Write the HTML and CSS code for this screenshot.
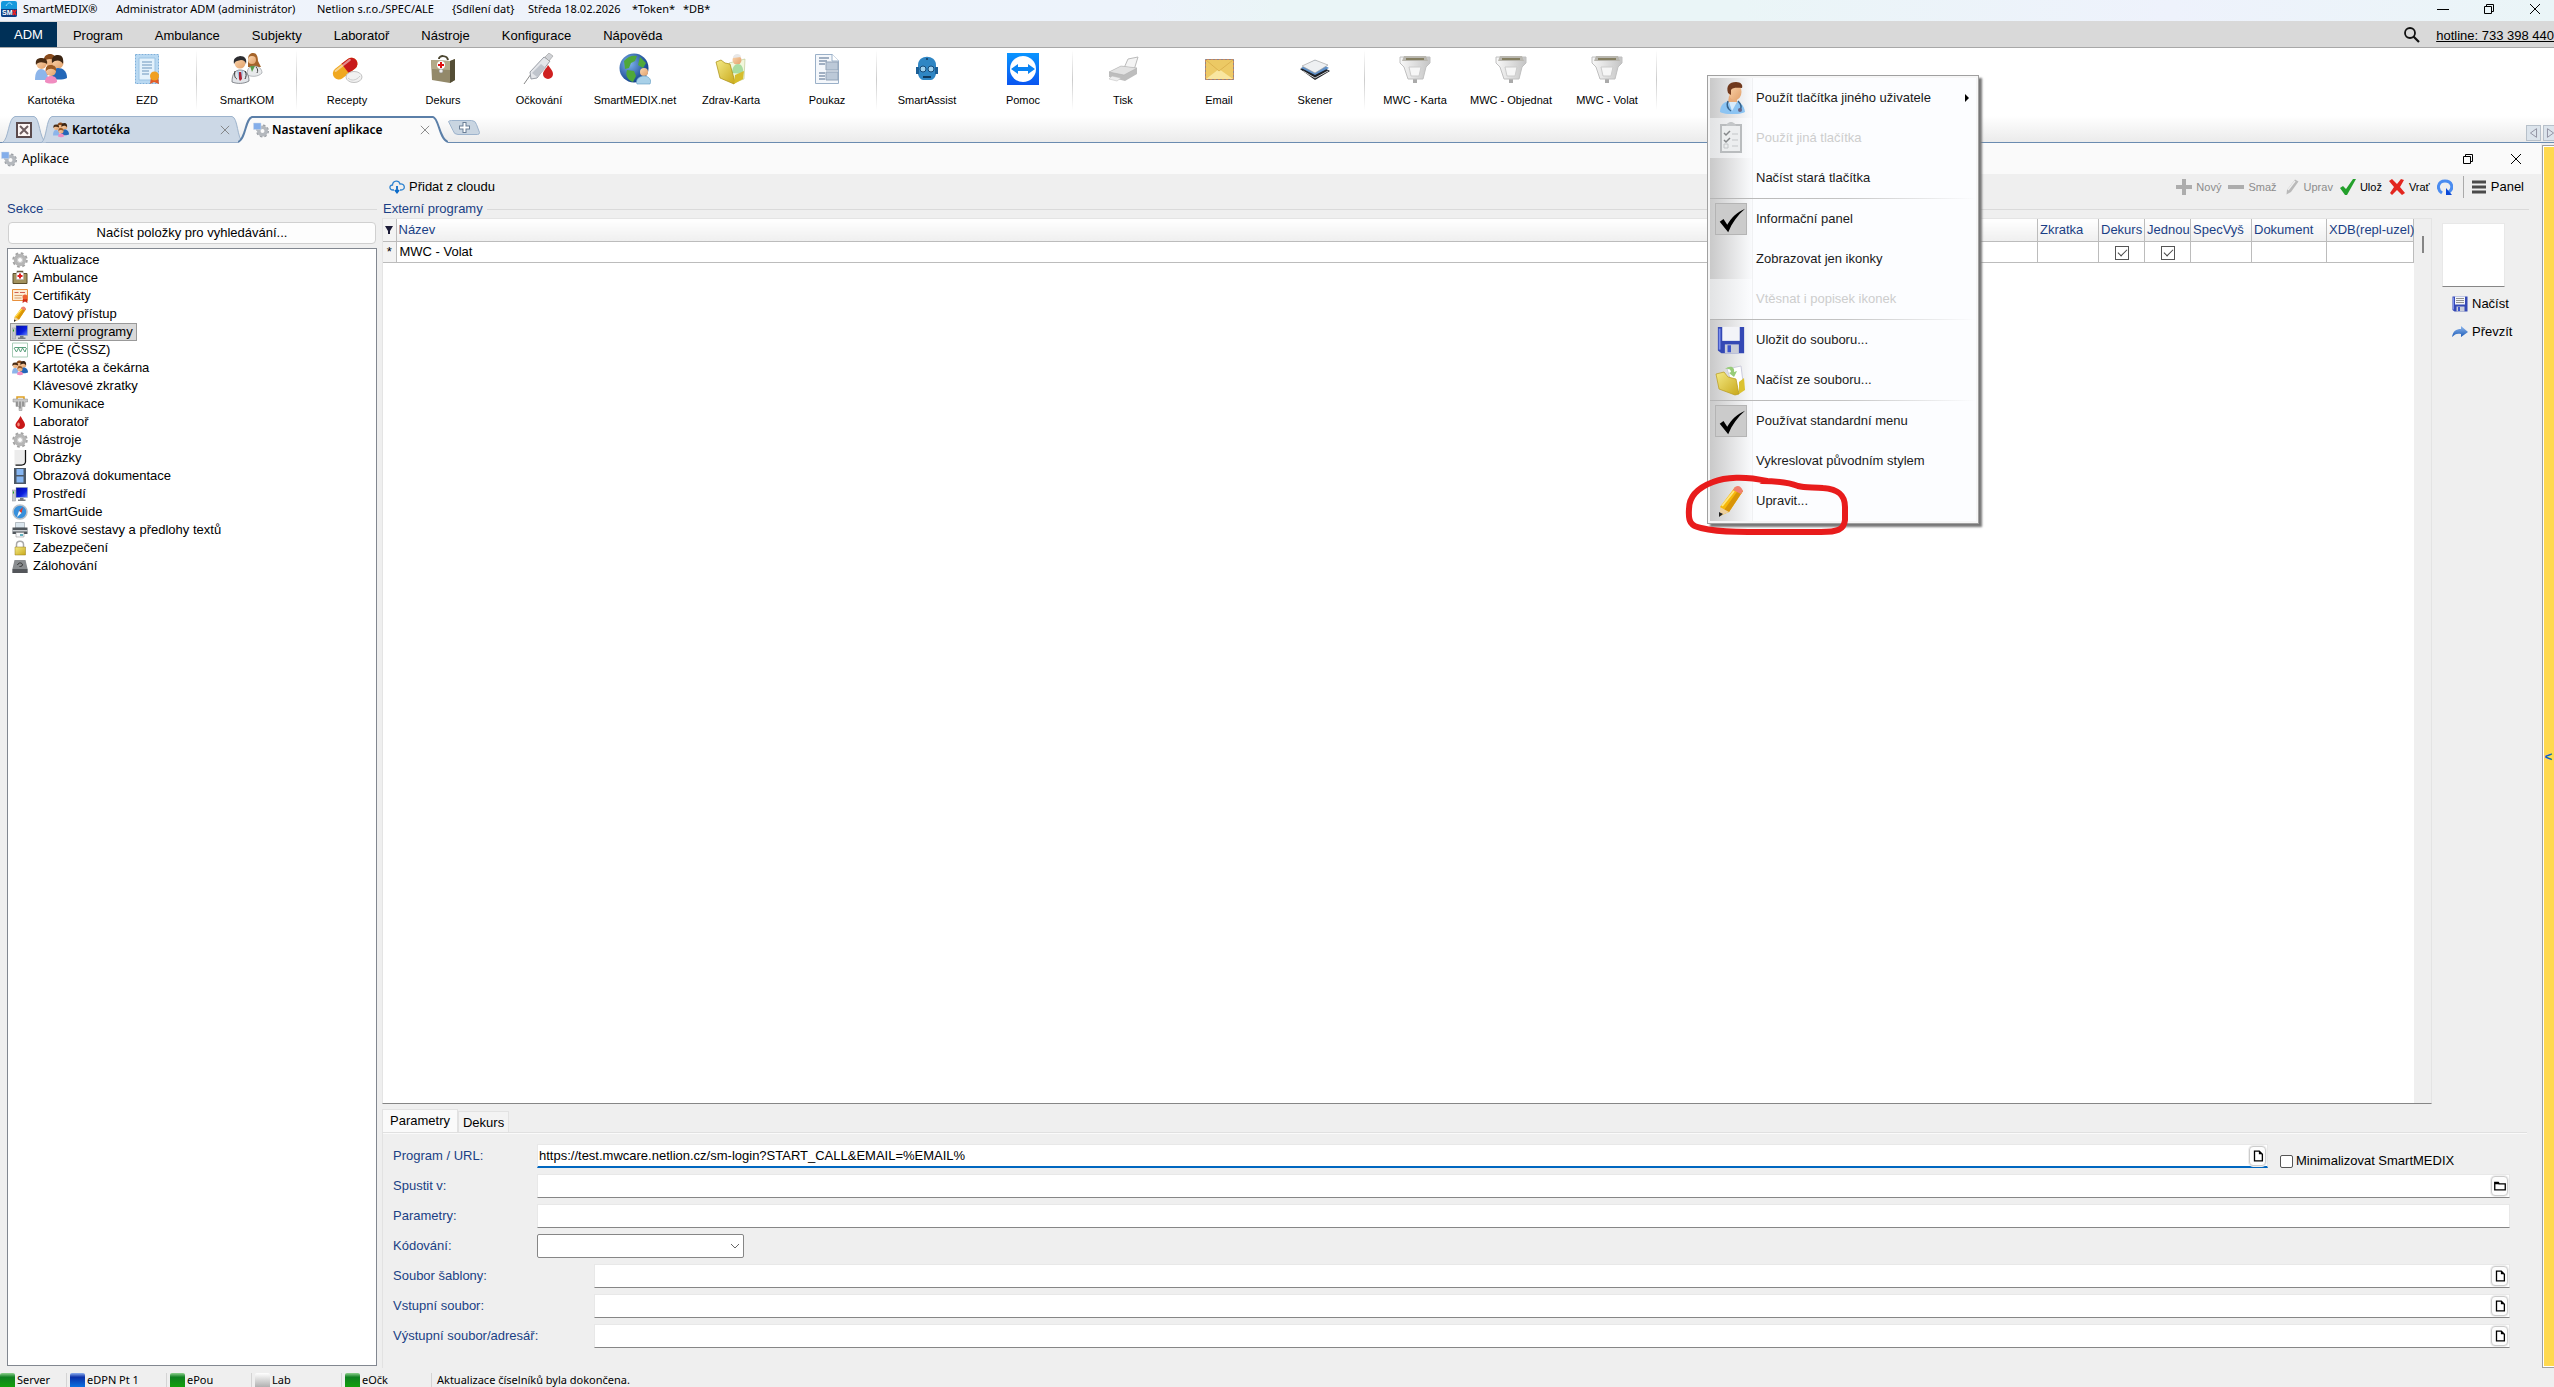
FILE: index.html
```html
<!DOCTYPE html>
<html lang="cs">
<head>
<meta charset="utf-8">
<title>SmartMEDIX</title>
<link rel="stylesheet" href="styles.css">
</head>
<body>
<svg class="sprite" aria-hidden="true">
  <defs>
    <linearGradient id="gBlue" x1="0" y1="0" x2="0" y2="1"><stop offset="0" stop-color="#8fb8ee"/><stop offset="1" stop-color="#1d5cb8"/></linearGradient>
    <linearGradient id="gGold" x1="0" y1="0" x2="1" y2="1"><stop offset="0" stop-color="#f4ea86"/><stop offset="1" stop-color="#c9a91a"/></linearGradient>
    <linearGradient id="gGrey" x1="0" y1="0" x2="1" y2="0"><stop offset="0" stop-color="#f8f8f8"/><stop offset="1" stop-color="#c4c4c4"/></linearGradient>
    <linearGradient id="gScreen" x1="0" y1="0" x2="1" y2="1"><stop offset="0" stop-color="#0008a0"/><stop offset=".6" stop-color="#0a1fe0"/><stop offset="1" stop-color="#6b8cff"/></linearGradient>
    <linearGradient id="gTv" x1="0" y1="0" x2="0" y2="1"><stop offset="0" stop-color="#0a95ff"/><stop offset="1" stop-color="#0a55f0"/></linearGradient>
    <radialGradient id="gGlobe" cx=".35" cy=".35" r=".7"><stop offset="0" stop-color="#7fb4ee"/><stop offset="1" stop-color="#0b3a86"/></radialGradient>
    <linearGradient id="gSkin" x1="0" y1="0" x2="1" y2="1"><stop offset="0" stop-color="#fbd6ae"/><stop offset="1" stop-color="#e2a06a"/></linearGradient>
  </defs>
  <symbol id="people" viewBox="0 0 32 32">
    <circle cx="15" cy="8" r="5.5" fill="url(#gSkin)"/><path d="M9 9c-1-6 3-8 6-8s7 2 6 8c-2-3-9-5-12 0z" fill="#8a4b1c"/>
    <path d="M10 22c0-6 2-9 5-9s6 3 6 9z" fill="#e06a5a"/>
    <circle cx="6.500" cy="11" r="5" fill="url(#gSkin)"/><path d="M1 12c-1-6 2-7 6-7s6 3 5 6c-3-2-9-3-11 1z" fill="#4a2c14"/>
    <path d="M0 27c0-7 2-11 6-11s7 4 7 11z" fill="#8cb5ea"/>
    <circle cx="23" cy="10" r="5.500" fill="url(#gSkin)"/><path d="M17 10c-1-7 3-8 6-8 4 0 6 3 5 9-2-4-7-5-11-1z" fill="#3c2513"/>
    <path d="M16 25c0-7 3-10 7-10 5 0 9 3 9 10-4 2-12 2-16 0z" fill="#2367b8"/>
    <circle cx="16" cy="18" r="5" fill="url(#gSkin)"/><path d="M11 18c-1-5 2-6 5-6s6 2 5 6c-3-3-7-3-10 0z" fill="#9a5a24"/>
    <path d="M10 29c0-4 2-6 6-6s6 2 6 6c-3 2-9 2-12 0z" fill="#f08cc0"/>
  </symbol>
  <symbol id="ezd" viewBox="0 0 32 32">
    <path d="M4.500 1.500h23v29h-23z" fill="#b9d9f2" stroke="#7fb0da" stroke-dasharray="2 1"/><path d="M8 5h16v22H8z" fill="#e4f2fc" stroke="#9cc4e4"/>
    <path d="M11 9h10M11 12h10M11 15h10M11 18h7M11 21h7" stroke="#6d96bd"/>
    <path d="M20 24l-1 7 4-2 5 2-1-7z" fill="#e25a28"/><circle cx="23.500" cy="23" r="4.500" fill="#f0a020"/>
  </symbol>
  <symbol id="doctors" viewBox="0 0 32 32">
    <path d="M17 7c0-5 2-7 5-7s5 3 5 8l3 6H17z" fill="#a5642a"/><circle cx="21" cy="7" r="4" fill="url(#gSkin)"/>
    <path d="M16 22c0-6 2-9 7-9s8 3 8 7c-4 4-10 4-15 2z" fill="#e8eaec" stroke="#8c9096" stroke-width=".6"/><path d="M19 13l2 6 3-6z" fill="#5a9a4a"/><path d="M25 14c2 2 2 4 1 6" fill="none" stroke="#444" stroke-width="1"/>
    <circle cx="9" cy="10" r="5.500" fill="url(#gSkin)"/><path d="M3 11c-1-6 2-7 6-8 5 0 7 3 6 8-1-3-2-4-5-4-3 1-5 0-7 4z" fill="#2c2c30"/>
    <path d="M1 29c0-8 3-12 8-12s9 3 9 11c-5 3-12 3-17 1z" fill="#e2e5e9" stroke="#6c7076" stroke-width=".8"/><path d="M6 17l3 3 3-3-1 9H8z" fill="#9ab8dc"/><path d="M8 19h2l1 7-2 2-1-2z" fill="#b02030"/><path d="M4 18c-1 5 0 7 2 8M14 18c2 3 1 6 0 8" fill="none" stroke="#333" stroke-width="1"/>
  </symbol>
  <symbol id="pills" viewBox="0 0 32 32">
    <g transform="rotate(-38 14 17)"><rect x="1" y="10" width="28" height="12" rx="6" fill="#f0a820"/><path d="M15 10h8a6 6 0 0 1 0 12h-8z" fill="#c81a1a"/><path d="M6 12h18" stroke="#fff" stroke-width="2" opacity=".5" stroke-linecap="round"/></g>
    <ellipse cx="23" cy="24" rx="8" ry="5.500" fill="#f1f1f1" stroke="#c2c2c2"/><path d="M17 25c3 3 8 3 12-2" fill="none" stroke="#ccc"/>
  </symbol>
  <symbol id="bag" viewBox="0 0 32 32">
    <path d="M12 6c0-4 8-4 9 1" fill="none" stroke="#4a4530" stroke-width="2"/>
    <path d="M4 7l19 1 5-2v21l-5 3-18-3z" fill="#93896a"/><path d="M23 8l5-2v21l-5 3z" fill="#544d35"/><path d="M4 7l19 1v9L5 16z" fill="#b3aa88"/>
    <circle cx="14" cy="12" r="4" fill="#fff"/><path d="M14 9v6M11 12h6" stroke="#e01010" stroke-width="2"/><circle cx="14" cy="18" r="2" fill="#eee" stroke="#888" stroke-width=".5"/>
  </symbol>
  <symbol id="syringe" viewBox="0 0 32 32">
    <path d="M1 31L8 21" stroke="#888"/><path d="M7 19L21 4l6 4-13 17-6 1z" fill="#e4e6ea" stroke="#9a9ea6"/><path d="M9 20l9-9 5 4-9 9z" fill="#bfc4cc"/><path d="M22 4l4-4 4 3-4 5z" fill="#d0d2d6" stroke="#999" stroke-width=".6"/>
    <path d="M25 12c3 4 5 6 5 9a5 5 0 0 1-10 0c0-3 3-5 5-9z" fill="#cf2020"/>
  </symbol>
  <symbol id="globe" viewBox="0 0 32 32">
    <circle cx="15" cy="15" r="14.500" fill="url(#gGlobe)"/><path d="M5 8c4-5 9-6 13-5l-2 5-4 2-2 5-4 1zM8 17l7 1 2 5-3 6c-5-2-8-6-6-12zM21 4l6 6-3 5-5-3z" fill="#4fa83a"/>
    <circle cx="25" cy="19" r="4" fill="url(#gSkin)"/><path d="M18 31c-2-4 2-8 7-8s8 4 6 8z" fill="#a8d0e8" stroke="#5c98c0" stroke-width=".6"/>
  </symbol>
  <symbol id="health" viewBox="0 0 32 32">
    <path d="M14 10l16-4-1 20-11 4z" fill="#f2f7dc" stroke="#b8c48a" stroke-width=".6"/><circle cx="22" cy="7" r="4.500" fill="url(#gSkin)"/><path d="M18 5c0-5 8-5 8-1z" fill="#e8e8e8"/><path d="M17 20c0-6 3-9 6-9s6 3 5 10z" fill="#a8dca0"/>
    <path d="M1 9l5-2 4 3 5 1 5 18-1 2L5 25z" fill="url(#gGold)" stroke="#a88c10" stroke-width=".7"/><path d="M19 31l9-5 1-8-9 4z" fill="#d6bd2c"/>
  </symbol>
  <symbol id="doc" viewBox="0 0 32 32">
    <path d="M4.500 1.500h17l6 6v23h-23z" fill="#f4f7fb" stroke="#9ab0c8"/><path d="M21 1v7h7" fill="#fff" stroke="#9ab0c8"/>
    <path d="M8 5h10M8 8h8M8 11h6M8 20h6M8 23h6M8 26h6" stroke="#8498b0" stroke-width="1.500"/><path d="M15 9h12v8H15zM15 19h12v8H15z" fill="#bcc9d8" stroke="#93a4b8"/>
  </symbol>
  <symbol id="robot" viewBox="0 0 32 32">
    <path d="M7 12C7 1 25 1 25 12v8c0 4-3 7-5 7h-8c-2 0-5-3-5-7z" fill="#2f86c4"/><path d="M5 14h3v7H5zM24 14h3v7h-3z" fill="#1c5f96"/><circle cx="12" cy="16" r="3" fill="#9fd2f0" stroke="#164a78"/><circle cx="20" cy="16" r="3" fill="#9fd2f0" stroke="#164a78"/><path d="M12 23h8v2h-8z" fill="#10395c"/><circle cx="16" cy="6" r="1" fill="#10395c"/>
  </symbol>
  <symbol id="viewer" viewBox="0 0 32 32">
    <path d="M0 0h32v32H0z" fill="url(#gTv)"/><circle cx="16" cy="16" r="13" fill="#fff"/><path d="M4 16l7-5v3h10v-3l7 5-7 5v-3H11v3z" fill="#0a84f5"/>
  </symbol>
  <symbol id="printer" viewBox="0 0 32 32">
    <path d="M17 15l4-9 10-2-4 13z" fill="#f4f4f4" stroke="#bbb"/><path d="M2 19l12-6 16 2v6L18 28 2 24z" fill="#bdbdbd"/><path d="M2 19l12-6 16 2-13 7z" fill="#e2e2e2" stroke="#aaa" stroke-width=".5"/><path d="M5 23l9 2-4 3-8-2z" fill="#eee" stroke="#bbb" stroke-width=".5"/>
  </symbol>
  <symbol id="mail" viewBox="0 0 32 32">
    <path d="M3 7h27v19H3z" fill="#edca66"/><path d="M3 26l13-10 14 10z" fill="#f9e6a0"/><path d="M3 7l13 11L30 7" fill="#ecc964" stroke="#d8ac4a" stroke-width=".8"/><path d="M2.500 6.500h28v20h-28z" fill="none" stroke="#c98a5a"/><path d="M2.500 6.500h28v20h-28z" fill="none" stroke="#5a80b5" stroke-dasharray="1 3"/>
  </symbol>
  <symbol id="scanner" viewBox="0 0 32 32">
    <path d="M1 16l15 11 15-9-15-8z" fill="#1c2026"/><path d="M2 15l14 7 14-7-14-8z" fill="#5d8fc8"/><path d="M3 13l13-6 13 5-13 8z" fill="#eef0f2" stroke="#999" stroke-width=".6"/><path d="M4 18l12 7 13-7" fill="none" stroke="#ccc"/>
  </symbol>
  <symbol id="plug" viewBox="0 0 32 32">
    <path d="M14 25h4v5h-4z" fill="#aaa"/><path d="M1 4h30v6l-4 4-3 12H9L5 14 1 10z" fill="url(#gGrey)" stroke="#c0c0c0"/><path d="M5 3h22l2 5H3z" fill="#b9b7b0"/><path d="M7 5h18v2H7z" fill="#857f62"/><path d="M10 14h12l-2 9h-8z" fill="#f6f6f6" stroke="#ccc"/>
  </symbol>
  <symbol id="gear" viewBox="0 0 32 32">
    <circle cx="16" cy="16" r="13" fill="none" stroke="#a3a3a3" stroke-width="5" stroke-dasharray="5.200 5"/><circle cx="16" cy="16" r="9" fill="none" stroke="#b6b6b6" stroke-width="7"/><circle cx="16" cy="16" r="5" fill="#fff" stroke="#999"/>
  </symbol>
  <symbol id="appgear" viewBox="0 0 32 32">
    <circle cx="19" cy="18" r="11" fill="none" stroke="#999da2" stroke-width="4" stroke-dasharray="4.600 4"/><circle cx="19" cy="18" r="7.500" fill="none" stroke="#b4b8bd" stroke-width="7"/><path d="M1 2h15v13H1z" fill="#84aeea" stroke="#ccd8ea"/>
  </symbol>
  <symbol id="case" viewBox="0 0 32 32">
    <path d="M11 7V3h10v4" fill="none" stroke="#65583a" stroke-width="3"/><path d="M2 7h28v20H2z" fill="#a3925e" stroke="#5c4f2c" stroke-width="2"/><path d="M9 5h14v14H9z" fill="#fff" stroke="#aaa"/><path d="M16 7v10M11 12h10" stroke="#e02020" stroke-width="4"/>
  </symbol>
  <symbol id="cert" viewBox="0 0 32 32">
    <path d="M1 3h30v22H1z" fill="#fdebd2" stroke="#e8903c" stroke-width="2"/><path d="M5 9h8m3 0h10" stroke="#d06050" stroke-width="2"/><path d="M5 15h16M5 20h14" stroke="#d8a070" stroke-width="2"/><path d="M22 20l-1 10 5-3 5 3-1-10z" fill="#d02a18"/><circle cx="26" cy="18" r="5" fill="#ee6030"/>
  </symbol>
  <symbol id="pencil" viewBox="0 0 32 32">
    <path d="M5 22L20 2l8 4-14 21-9 4z" fill="#f6b80c"/><path d="M9 25L24 4l4 2-14 21z" fill="#d89408"/><path d="M20 2q5-3 8 4l-2 3-8-4z" fill="#f08070"/><path d="M5 22l9 5-9 4z" fill="#ecd0a0"/><path d="M4 27l4 2-4 3z" fill="#222"/><path d="M7 21L19 6" stroke="#ffe680" stroke-width="2"/>
  </symbol>
  <symbol id="pencilgrey" viewBox="0 0 32 32"><path d="M6 22L22 1l7 4-15 21-9 5z" fill="#b9b9b9"/><path d="M8 22L22 4" stroke="#eee" stroke-width="3"/></symbol>
  <symbol id="pc" viewBox="0 0 32 32">
    <path d="M0 8h7v22H0z" fill="#c4c8cc" stroke="#8c9096"/><path d="M3 11v4" stroke="#20a020" stroke-width="2"/><path d="M8 3h23v20H8z" fill="url(#gScreen)" stroke="#9aa"/><path d="M16 24h7v3h4v3H12v-3h4z" fill="#777c82"/>
  </symbol>
  <symbol id="cssz" viewBox="0 0 32 32"><path d="M1 2h30v28H1z" fill="#fff" stroke="#a9cdb8" stroke-width="2"/><path d="M4 12l5 8 4-8 4 8 4-8 5 8 3-8M5 11h23" fill="none" stroke="#5aa07c" stroke-width="2"/></symbol>
  <symbol id="port" viewBox="0 0 32 32"><path d="M10 6V2h14v4" fill="none" stroke="#e0a020" stroke-width="3"/><path d="M2 6h29v6h-5v9h-6v8h-6v-8H8v-9H2z" fill="#c9c9c9" stroke="#888"/><path d="M10 11v9M16 11v14M22 11v9" stroke="#666" stroke-width="2"/></symbol>
  <symbol id="drop" viewBox="0 0 32 32"><path d="M17 4c5 9 9 13 9 18a9.500 8 0 0 1-19 0c0-5 6-9 10-18z" fill="#c81818"/><ellipse cx="13" cy="21" rx="2.500" ry="4" fill="#f58a7a"/></symbol>
  <symbol id="sheet" viewBox="0 0 32 32"><path d="M5 0h22v24l-6 6H5z" fill="#ececec"/><path d="M27 0v24q-1 6-8 6H7" fill="none" stroke="#111" stroke-width="2.500"/></symbol>
  <symbol id="film" viewBox="0 0 32 32"><path d="M4 0h24v32H4z" fill="#4c5866"/><path d="M9 2h14v12H9zM9 17h14v12H9z" fill="#86b6f2"/></symbol>
  <symbol id="compass" viewBox="0 0 32 32"><circle cx="16" cy="16" r="14" fill="#3790dc" stroke="#b9c1c9" stroke-width="3"/><path d="M22 6l-3 12-5-4z" fill="#e03a2a"/><path d="M10 26l4-12 5 4z" fill="#fff"/></symbol>
  <symbol id="print2" viewBox="0 0 32 32"><path d="M7 1h18v11H7z" fill="#dbe6ee" stroke="#7c868e"/><path d="M1 11h30v13H1z" fill="#50565c"/><path d="M1 16h30v3H1z" fill="#caced2"/><path d="M8 21h16v9H8z" fill="#f6f8fa" stroke="#888"/><path d="M16 24h6v4h-6z" fill="#60b0c0"/></symbol>
  <symbol id="lock" viewBox="0 0 32 32"><path d="M9 15V9c0-9 14-9 14 0v6" fill="none" stroke="#a9a9a9" stroke-width="3"/><path d="M6 14h21v16H6z" fill="url(#gGold)" stroke="#947a1c"/></symbol>
  <symbol id="disk" viewBox="0 0 32 32"><path d="M5 4h22l4 17v9H1v-9z" fill="#8a8d90"/><path d="M1 22h30v8H1z" fill="#53565a"/><path d="M11 14c2-6 10-5 10 0-1 3-4 3-6 3" fill="none" stroke="#333" stroke-width="2"/></symbol>
  <symbol id="floppy" viewBox="0 0 32 32"><path d="M1 1h30v30H5l-4-3z" fill="#3448b4"/><path d="M6 1h20v16H6z" fill="#f3f4f8"/><path d="M9 21h16v10H9z" fill="#c9ccd8"/><path d="M12 22h4v8h-4z" fill="#3c55cc"/><path d="M3 3v24" stroke="#7d90ee" stroke-width="2"/></symbol>
  <symbol id="floppylines" viewBox="0 0 32 32"><use href="#floppy"/><path d="M8 5h16M8 9h16M8 13h16" stroke="#909090" stroke-width="2"/></symbol>
  <symbol id="openfile" viewBox="0 0 32 32">
    <path d="M12 5l14-3 3 24-9 3z" fill="#fff" stroke="#ccd"/><path d="M10 5c5-4 10-2 9 3l3-1-3 6-5-4 2-1c0-3-3-4-6-3z" fill="#98cc78"/><path d="M1 10l8-2 4 5 8 2 3 15-4 1L4 25z" fill="url(#gGold)" stroke="#b89a18" stroke-width=".7"/><path d="M24 30l6-4-1-12-5 4z" fill="#dcc230"/>
  </symbol>
  <symbol id="doctor" viewBox="0 0 32 32">
    <path d="M5 30c0-8 5-11 12-11s12 3 13 11c-6 3-19 3-25 0z" fill="#8cc4f2"/><path d="M14 14h8v7l-4 3-5-4z" fill="#e8ac7c"/><ellipse cx="20" cy="10" rx="6.500" ry="8" fill="url(#gSkin)"/><path d="M13 11c-2-7 1-11 8-11 5 0 7 3 6 6-4 0-9-1-11 2v5z" fill="#70381c"/><path d="M14 20l3 9 5-9" fill="#d8ecfc"/><path d="M13 19c-2 5 0 8 3 10M23 19c3 3 4 6 2 9" fill="none" stroke="#34618a" stroke-width="1.500"/><circle cx="25" cy="28" r="2" fill="#668"/>
  </symbol>
  <symbol id="clip" viewBox="0 0 32 32"><path d="M6 3h20v27H6z" fill="#eceeef" stroke="#b9bcbe" stroke-width="2"/><path d="M11 4c0-2 3-4 5-4s5 2 5 4z" fill="#c3c6c8"/><path d="M9 11l2 2 4-4M9 18l2 2 4-4" fill="none" stroke="#85888a" stroke-width="1.500"/><path d="M17 12h6M17 18h6M17 24h6M9 22h4v4H9z" fill="none" stroke="#c3c6c8"/></symbol>
  <symbol id="tick" viewBox="0 0 32 32"><path d="M4 19l4-3 4 6C17 14 22 9 31 5 23 12 17 20 13 30z" fill="#000"/></symbol>
  <symbol id="file" viewBox="0 0 16 16"><path d="M4 2.500h5.500L13 6v7.500H4z" fill="#fff" stroke="#000" stroke-width="1.500"/><path d="M9 2v4h4" fill="#000"/></symbol>
  <symbol id="folder" viewBox="0 0 16 16"><path d="M2 12.500V4h4l1 1.500h7v7z" fill="#fff" stroke="#000" stroke-width="1.500"/><path d="M2 4h5v2H2z"/></symbol>
  <symbol id="xthin" viewBox="0 0 12 12"><path d="M1 1l10 10M11 1L1 11" fill="none" stroke="currentColor"/></symbol>
  <symbol id="restore" viewBox="0 0 12 12"><path d="M1.500 3.500h7v7h-7zM3.500 3.500v-2h7v7h-2" fill="none" stroke="currentColor"/></symbol>
</svg>

<div class="app">
  <header class="titlebar">
    <svg class="logo" viewBox="0 0 16 16"><rect width="16" height="16" rx="2" fill="#1598dc"/><path d="M0 8h16v6a2 2 0 0 1-2 2H2a2 2 0 0 1-2-2z" fill="#0c3f86"/><path d="M5 5c2-4 5-4 6-1" fill="none" stroke="#9adcff"/><text x="1" y="14" font-size="7" font-weight="bold" fill="#fff" font-family="Liberation Sans">SM</text><path d="M12 9l3 5M15 9l-3 5" stroke="#f02020" stroke-width="1.500"/></svg>
    <span class="t-name">SmartMEDIX®</span><span class="t-user">Administrator ADM (administrátor)</span><span class="t-org">Netlion s.r.o./SPEC/ALE</span><span class="t-share">{Sdílení dat}</span><span class="t-date">Středa 18.02.2026</span><span class="t-token">*Token*</span><span>*DB*</span>
    <div class="winbtns">
      <button aria-label="Minimalizovat"><svg viewBox="0 0 12 12"><path d="M0 6.500h12" stroke="#000"/></svg></button>
      <button aria-label="Obnovit"><svg><use href="#restore"/></svg></button>
      <button aria-label="Zavřít"><svg><use href="#xthin"/></svg></button>
    </div>
  </header>

  <nav class="menubar">
    <button class="adm">ADM</button><button>Program</button><button>Ambulance</button><button>Subjekty</button><button>Laboratoř</button><button>Nástroje</button><button>Konfigurace</button><button>Nápověda</button>
    <div class="hot"><svg class="search" viewBox="0 0 18 18"><circle cx="7" cy="7" r="5" fill="none" stroke="#111" stroke-width="1.800"/><path d="M10.500 10.500L16 16" stroke="#111" stroke-width="2.200"/></svg><a href="#">hotline: 733 398 440</a></div>
  </nav>

  <div class="toolbar">
    <button><svg><use href="#people"/></svg>Kartotéka</button>
    <button><svg><use href="#ezd"/></svg>EZD</button>
    <i></i>
    <button><svg><use href="#doctors"/></svg>SmartKOM</button>
    <i></i>
    <button><svg><use href="#pills"/></svg>Recepty</button>
    <button><svg><use href="#bag"/></svg>Dekurs</button>
    <button><svg><use href="#syringe"/></svg>Očkování</button>
    <button><svg><use href="#globe"/></svg>SmartMEDIX.net</button>
    <button><svg><use href="#health"/></svg>Zdrav-Karta</button>
    <button><svg><use href="#doc"/></svg>Poukaz</button>
    <i></i>
    <button><svg><use href="#robot"/></svg>SmartAssist</button>
    <button><svg><use href="#viewer"/></svg>Pomoc</button>
    <i></i>
    <button><svg><use href="#printer"/></svg>Tisk</button>
    <button><svg><use href="#mail"/></svg>Email</button>
    <button><svg><use href="#scanner"/></svg>Skener</button>
    <i></i>
    <button><svg><use href="#plug"/></svg>MWC - Karta</button>
    <button><svg><use href="#plug"/></svg>MWC - Objednat</button>
    <button><svg><use href="#plug"/></svg>MWC - Volat</button>
    <i></i>
  </div>

  <div class="tabs">
    <div class="tab tab-x">
      <svg class="shape" viewBox="0 0 44 27"><path d="M.500 26.500C7 23 6 2 13 .500h19c6 1 5 22 12 26" fill="#ccd8e6" stroke="#9db3cc"/></svg>
      <button aria-label="Zavřít vše"><svg viewBox="0 0 16 16"><path d="M1 1h14v14H1z" fill="#fdf6f4" stroke="#5a4a4c" stroke-width="2"/><path d="M4 4l8 8M12 4l-8 8" stroke="#6e5e60" stroke-width="2"/></svg></button>
    </div>
    <div class="tab tab-k">
      <svg class="shape" viewBox="0 0 202 27"><path d="M.500 26.500C6 23 5 2 11 .500h180c6 1 5 22 11 26" fill="#ccd8e6" stroke="#9db3cc"/></svg>
      <svg class="ic"><use href="#people"/></svg><b>Kartotéka</b><button aria-label="Zavřít kartu"><svg><use href="#xthin"/></svg></button>
    </div>
    <div class="tab tab-n">
      <svg class="shape" viewBox="0 0 210 27"><path d="M0 26C8 23 7 3 14 1h181c6 1 6 22 15 25v2H0z" fill="#fafafa"/><path d="M0 26C8 23 7 3 14 1h181c6 1 6 22 15 25" fill="none" stroke="#5b7fa8" stroke-width="2"/></svg>
      <svg class="ic"><use href="#appgear"/></svg><b>Nastavení aplikace</b><button aria-label="Zavřít kartu"><svg><use href="#xthin"/></svg></button>
    </div>
    <button class="tab-plus" aria-label="Nová karta"><svg viewBox="0 0 33 15"><path d="M.500 1.500q1-1 3-1h20q4 0 5 4l3 8q0 2-2 2H10q-4 0-5-4z" fill="#c9d5e1" stroke="#9db3cc"/><path d="M16.500 2v11M11 7.500h11" stroke="#6b7f96" stroke-width="4"/><path d="M16.500 3v9M12 7.500h9" stroke="#fff" stroke-width="2"/></svg></button>
    <div class="tabnav"><button aria-label="Vlevo"><svg viewBox="0 0 15 16"><path d="M11 3v10L4 8z" fill="none" stroke="#889"/></svg></button><button aria-label="Vpravo"><svg viewBox="0 0 15 16"><path d="M4 3v10l7-5z" fill="none" stroke="#889"/></svg></button></div>
  </div>

  <div class="work">
    <main class="mdi">
      <div class="mdihead"><svg class="ic"><use href="#appgear"/></svg><span>Aplikace</span>
        <div class="mdibtns"><button aria-label="Obnovit okno"><svg><use href="#restore"/></svg></button><button aria-label="Zavřít okno"><svg><use href="#xthin"/></svg></button></div>
      </div>
      <div class="mdibody">
        <section class="left">
          <h2 class="legend">Sekce</h2>
          <button class="load">Načíst položky pro vyhledávání...</button>
          <ul class="list">
            <li><svg><use href="#gear"/></svg>Aktualizace</li>
            <li><svg><use href="#case"/></svg>Ambulance</li>
            <li><svg><use href="#cert"/></svg>Certifikáty</li>
            <li><svg><use href="#pencil"/></svg>Datový přístup</li>
            <li class="sel"><svg><use href="#pc"/></svg>Externí programy</li>
            <li><svg><use href="#cssz"/></svg>IČPE (ČSSZ)</li>
            <li><svg><use href="#people"/></svg>Kartotéka a čekárna</li>
            <li><svg></svg>Klávesové zkratky</li>
            <li><svg><use href="#port"/></svg>Komunikace</li>
            <li><svg><use href="#drop"/></svg>Laboratoř</li>
            <li><svg><use href="#gear"/></svg>Nástroje</li>
            <li><svg><use href="#sheet"/></svg>Obrázky</li>
            <li><svg><use href="#film"/></svg>Obrazová dokumentace</li>
            <li><svg><use href="#pc"/></svg>Prostředí</li>
            <li><svg><use href="#compass"/></svg>SmartGuide</li>
            <li><svg><use href="#print2"/></svg>Tiskové sestavy a předlohy textů</li>
            <li><svg><use href="#lock"/></svg>Zabezpečení</li>
            <li><svg><use href="#disk"/></svg>Zálohování</li>
          </ul>
        </section>
        <section class="right">
          <div class="actions">
            <button class="cloud"><svg viewBox="0 0 16 16"><path d="M5 11H4C0 11 0 6 3.500 6 4 1 10 1 11 5c5-1 6 6 1 6h-1" fill="none" stroke="#2f83d0" stroke-width="1.300"/><path d="M8 7v6M6 11l2 2.500 2-2.500" fill="none" stroke="#0a6ac8" stroke-width="1.800"/></svg>Přidat z cloudu</button>
            <div class="crud">
              <button disabled><svg viewBox="0 0 16 16"><path d="M6 0h4v6h6v4h-6v6H6v-6H0V6h6z" fill="#adadad"/></svg>Nový</button>
              <button disabled><svg viewBox="0 0 16 16"><path d="M0 6h16v4H0z" fill="#adadad"/></svg>Smaž</button>
              <button disabled><svg><use href="#pencilgrey"/></svg>Uprav</button>
              <button><svg viewBox="0 0 16 16"><path d="M0 9l3-2 3 3 7-10h3L7 16H5z" fill="#24a02c"/></svg>Ulož</button>
              <button><svg viewBox="0 0 16 16"><path d="M0 2l3-2 5 5 4-5 3 1-4 7 5 6-3 2-5-5-5 5-2-2 4-6z" fill="#e3261e"/></svg>Vrať</button>
              <button aria-label="Obnovit data"><svg viewBox="0 0 16 16"><path d="M5 14C-1 10 1 2 8 2s9 7 4 11" fill="none" stroke="#4a8cf0" stroke-width="3"/><path d="M9 9v7h6z" fill="#0a48d8"/></svg></button>
              <button class="panelbtn"><svg viewBox="0 0 14 14"><path d="M0 2h14M0 7h14M0 12h14" stroke="#4a4a4a" stroke-width="3"/></svg>Panel</button>
            </div>
          </div>
          <h2 class="legend wide">Externí programy</h2>
          <div class="area">
            <div class="gridbox">
              <div class="scroller">
              <table class="grid">
                <colgroup><col class="c-mark"><col><col class="c-zk"><col class="c-de"><col class="c-je"><col class="c-sp"><col class="c-do"><col class="c-xd"></colgroup>
                <thead><tr><th class="m"><svg viewBox="0 0 8 8"><path d="M0 0h8L5 5v3H3V5z" fill="#1c1c38"/></svg></th><th>Název</th><th>Zkratka</th><th>Dekurs</th><th>Jednou</th><th>SpecVyš</th><th>Dokument</th><th>XDB(repl-uzel)</th></tr></thead>
                <tbody><tr><td class="m">*</td><td>MWC - Volat</td><td></td><td class="c"><input type="checkbox" checked aria-label="Dekurs"></td><td class="c"><input type="checkbox" checked aria-label="Jednou"></td><td></td><td></td><td></td></tr></tbody>
              </table>
              </div>
              <div class="vscroll"><span></span></div>
            </div>
            <div class="side">
              <div class="pic"></div>
              <button><svg><use href="#floppylines"/></svg>Načíst</button>
              <button><svg viewBox="0 0 16 16"><path d="M0 13c1-6 4-8 9-8V2l7 6-7 5v-3c-4-1-6 0-9 3z" fill="url(#gBlue)"/></svg>Převzít</button>
            </div>
          </div>
          <div class="ptabs"><button class="on">Parametry</button><button>Dekurs</button></div>
          <form class="form">
            <div class="row"><label for="f1">Program / URL:</label><div class="field focus"><input id="f1" type="text" value="https://test.mwcare.netlion.cz/sm-login?START_CALL&amp;EMAIL=%EMAIL%"><button type="button" aria-label="Vybrat soubor"><svg><use href="#file"/></svg></button></div><label class="min"><input type="checkbox">Minimalizovat SmartMEDIX</label></div>
            <div class="row"><label for="f2">Spustit v:</label><div class="field"><input id="f2" type="text"><button type="button" aria-label="Vybrat složku"><svg><use href="#folder"/></svg></button></div></div>
            <div class="row"><label for="f3">Parametry:</label><div class="field"><input id="f3" type="text"></div></div>
            <div class="row"><label for="f4">Kódování:</label><div class="combo"><select id="f4"><option></option></select><svg viewBox="0 0 10 6"><path d="M1 1l4 4 4-4" fill="none" stroke="#666"/></svg></div></div>
            <div class="row in"><label for="f5">Soubor šablony:</label><div class="field"><input id="f5" type="text"><button type="button" aria-label="Vybrat soubor"><svg><use href="#file"/></svg></button></div></div>
            <div class="row in"><label for="f6">Vstupní soubor:</label><div class="field"><input id="f6" type="text"><button type="button" aria-label="Vybrat soubor"><svg><use href="#file"/></svg></button></div></div>
            <div class="row in"><label for="f7">Výstupní soubor/adresář:</label><div class="field"><input id="f7" type="text"><button type="button" aria-label="Vybrat soubor"><svg><use href="#file"/></svg></button></div></div>
          </form>
        </section>
      </div>
    </main>
    <aside class="strip"><button>&lt;</button></aside>
  </div>

  <footer class="status">
    <span class="s1"><i></i>Server</span><span class="s2"><i class="blue"></i>eDPN Pt 1</span><span class="s3"><i></i>ePou</span><span class="s4"><i class="grey"></i>Lab</span><span class="s4"><i></i>eOčk</span><span class="msg">Aktualizace číselníků byla dokončena.</span>
  </footer>

  <div class="popup" role="menu">
    <button role="menuitem"><span class="pi"><svg><use href="#doctor"/></svg></span>Použít tlačítka jiného uživatele<svg class="arrow" viewBox="0 0 4 8"><path d="M0 0l4 4-4 4z"/></svg></button>
    <button role="menuitem" disabled><span class="pi"><svg><use href="#clip"/></svg></span>Použít jiná tlačítka</button>
    <button role="menuitem"><span class="pi"></span>Načíst stará tlačítka</button>
    <hr>
    <button role="menuitem"><span class="pi"><svg class="ck"><use href="#tick"/></svg></span>Informační panel</button>
    <button role="menuitem"><span class="pi"></span>Zobrazovat jen ikonky</button>
    <button role="menuitem" disabled><span class="pi"></span>Vtěsnat i popisek ikonek</button>
    <hr>
    <button role="menuitem"><span class="pi"><svg class="sm"><use href="#floppy"/></svg></span>Uložit do souboru...</button>
    <button role="menuitem"><span class="pi"><svg><use href="#openfile"/></svg></span>Načíst ze souboru...</button>
    <hr>
    <button role="menuitem"><span class="pi"><svg class="ck"><use href="#tick"/></svg></span>Používat standardní menu</button>
    <button role="menuitem"><span class="pi"></span>Vykreslovat původním stylem</button>
    <button role="menuitem"><span class="pi"><svg><use href="#pencil"/></svg></span>Upravit...</button>
  </div>
  <svg class="mark" viewBox="0 0 170 64"><path d="M82 8C60 3 40 4 28 9 12 15 4 24 4 36c-1 13 2 17 12 19 20 5 32 3 50 4h70c16 0 23-2 24-12V34c0-13-8-18-22-19-10-1-18 0-25-2-10-4-21-5-36-5z" fill="none" stroke="#e81c1c" stroke-width="6" stroke-linejoin="round"/></svg>
</div>
</body>
</html>
```
FILE: styles.css
```css
* { box-sizing: border-box; }
body { margin: 0; font: 13px/18px "Liberation Sans", Arial, sans-serif; color: #000; background: #efefef; }
button { font: inherit; color: inherit; background: none; border: 0; padding: 0; display: flex; align-items: center; white-space: nowrap; }
svg { display: block; flex: none; width: 16px; height: 16px; }
.sprite { position: absolute; width: 0; height: 0; }
.app { position: relative; height: 100vh; display: flex; flex-direction: column; overflow: hidden; }

.titlebar { display: flex; align-items: center; height: 21px; padding: 0 13px 3px 1px; background: linear-gradient(90deg, #eff3fb 0, #edf3fb 45%, #eaf5f7 50%, #eaf5f7 68%, #eef2fc 85%, #eaf5f7); font: 11px/16px "Noto Sans", "Open Sans", sans-serif; white-space: nowrap; flex: none; }
.logo { margin-right: 6px; }
.t-name { width: 93px; }
.t-user { width: 201px; }
.t-org { width: 135px; }
.t-share { width: 76px; }
.t-date { width: 104px; }
.t-token { width: 51px; }
.winbtns { display: flex; gap: 34px; margin-left: auto; }
.winbtns svg, .mdibtns svg { width: 12px; height: 12px; }

.menubar { display: flex; height: 27px; background: #d9d9d9; border-bottom: 1px solid #a8a8a8; flex: none; padding-top: 1px; }
.menubar button { padding: 2px 16px 0; }
.menubar .adm { background: #003057; color: #fff; padding: 0 14px; }
.hot { display: flex; align-items: center; margin-left: auto; gap: 15px; white-space: nowrap; }
.hot a { color: #000; padding-top: 3px; }
.search { width: 18px; height: 18px; }

.toolbar { display: flex; height: 68px; padding-left: 3px; background: #fff; flex: none; }
.toolbar button { width: 96px; flex-direction: column; padding-top: 5px; gap: 6px; font-size: 11px; }
.toolbar svg { width: 32px; height: 32px; }
.toolbar i { width: 1px; margin: 2px 2px 6px 1px; background: linear-gradient(#fff, #ccc 50%, #fff); }

.tabs { display: flex; height: 27px; padding-left: 2px; background: linear-gradient(#fff, #ebebeb); border-bottom: 1px solid #6a8bb0; flex: none; }
.tab { position: relative; display: flex; align-items: center; height: 27px; font: 12px/18px "Noto Sans", "Open Sans", sans-serif; }
.tab > * { position: relative; }
.tab .shape { position: absolute; left: 0; top: 0; width: 100%; height: 27px; }
.tab b { margin-left: 3px; font-weight: 600; white-space: nowrap; }
.tab button { margin-left: auto; color: #777; }
.tab-x { width: 44px; }
.tab-x button { margin: 0 0 0 14px; }
.tab-k { width: 202px; margin-left: -5px; padding: 0 13px 0 12px; }
.tab-k button svg, .tab-n button svg { width: 10px; height: 10px; }
.tab-n { width: 210px; margin-left: -5px; padding: 0 18px 0 15px; }
.tab-plus svg { width: 33px; height: 15px; }
.tab-plus { padding-bottom: 3px; }
.tabnav { display: flex; gap: 2px; margin: 9px -4px 0 auto; }
.tabnav button { background: #dce4ec; border: 1px solid #b7c0ca; height: 16px; }
.tabnav svg { width: 13px; height: 14px; }

.work { display: flex; flex: 1; min-height: 0; }
.mdi { display: flex; flex-direction: column; flex: 1; min-width: 0; }
.strip { width: 12px; margin-top: 2px; padding-right: 2px; border: 1px solid #a0a0a0; border-right: 0; box-shadow: inset 1px 1px #fff, inset 0 -1px #fff; background: #ffd94f; display: flex; align-items: center; justify-content: flex-end; color: #0a62c8; font-weight: bold; }
.mdihead { display: flex; align-items: center; height: 31px; padding: 0 19px 0 1px; margin-right: 1px; background: #fafafa; gap: 5px; font: 12px/18px "Noto Sans", "Open Sans", sans-serif; flex: none; }
.mdibtns { display: flex; gap: 36px; margin-left: auto; }
.mdibody { display: flex; flex: 1; min-height: 0; }
.left { display: flex; flex-direction: column; width: 377px; padding: 26px 0 2px 7px; flex: none; }
.legend { display: flex; align-items: center; gap: 4px; margin: 0; height: 18px; font-size: 13px; font-weight: normal; color: #1a3f85; white-space: nowrap; flex: none; }
.legend::after { content: ""; flex: 1; height: 1px; background: #dadada; }
.load { justify-content: center; height: 22px; margin: 4px 1px; background: #fdfdfd; border: 1px solid #d0d0d0; border-radius: 4px; flex: none; }
.list { flex: 1; margin: 0; padding: 2px; list-style: none; background: #fff; border: 1px solid #828790; overflow: hidden; }
.list li { display: flex; align-items: center; gap: 5px; width: max-content; height: 18px; padding: 0 3px 0 1px; border: 1px solid transparent; }
.list .sel { background: #d9d9d9; border-color: #999; }

.right { display: flex; flex-direction: column; flex: 1; min-width: 0; padding-left: 5px; }
.actions { display: flex; align-items: center; justify-content: space-between; height: 26px; padding: 0 18px 0 7px; flex: none; }
.actions button { gap: 4px; }
.crud { display: flex; align-items: center; gap: 7px; font-size: 11px; }
.crud button:disabled { color: #8c8c8c; }
.crud .panelbtn { margin-left: 3px; padding-left: 8px; height: 22px; border-left: 1px solid #aaa; font-size: 13px; gap: 5px; }
.panelbtn svg { width: 14px; height: 14px; }
.wide { margin: 0 13px 0 1px; }
.area { display: flex; flex: 1; min-height: 0; }
.gridbox { display: flex; flex: 1; min-width: 0; background: #fff; border: 1px solid #e4e4e4; border-bottom-color: #868686; }
.scroller { flex: 1; min-width: 0; }
.vscroll { width: 17px; background: #efefef; display: flex; justify-content: center; padding-top: 17px; }
.vscroll span { width: 2px; height: 17px; background: #858585; }
.grid { width: 100%; table-layout: fixed; border-collapse: collapse; line-height: 18px; }
.c-mark { width: 13px; } .c-zk { width: 61px; } .c-de { width: 46px; } .c-je { width: 46px; } .c-sp { width: 61px; } .c-do { width: 75px; } .c-xd { width: 87px; }
.grid th { height: 22px; padding: 0 0 0 2px; font-weight: normal; text-align: left; color: #1a3f85; white-space: nowrap; background: linear-gradient(#fff, #efefef); border: solid #bcbcbc; border-width: 0 1px 1px 0; }
.grid td { height: 21px; padding: 0 0 0 3px; border: solid #bcbcbc; border-width: 0 1px 1px 0; }
.grid .m { background: #f3f3f3; padding: 0; text-align: center; }
.grid .m svg { width: 8px; height: 8px; margin: 0 auto; }
.grid .c { padding: 0; text-align: center; }
input[type="checkbox"] { appearance: none; width: 13px; height: 13px; margin: 0; border: 1px solid #555; background: #fff; flex: none; border-radius: 2px; }
.grid input[type="checkbox"] { display: block; width: 14px; height: 14px; margin: 2px auto 0; border-radius: 0; }
.grid input:checked::after { content: ""; display: block; width: 8px; height: 4px; margin: 2px; border: solid #444; border-width: 0 0 1px 1px; transform: rotate(-45deg); }
.side { width: 110px; padding: 5px 0 0 10px; flex: none; }
.pic { width: 63px; height: 64px; margin-bottom: 8px; background: #fff; border: 1px solid #e8e8e8; border-bottom-color: #868686; }
.side button { gap: 4px; margin-left: 10px; height: 18px; margin-bottom: 10px; }

.ptabs { display: flex; align-items: flex-end; height: 23px; margin: 6px 15px 0 0; border-bottom: 1px solid #e0e0e0; box-shadow: 0 1px #fafafa; flex: none; }
.ptabs button { height: 21px; padding: 2px 4px 0; background: #f3f3f3; border: 1px solid #e2e2e2; border-bottom: 0; }
.ptabs .on { height: 23px; padding: 0 7px; background: #fafafa; }
.form { margin: 0; padding: 11px 32px 14px 10px; border-left: 1px solid #e2e2e2; flex: none; }
.row { display: flex; align-items: flex-start; height: 30px; }
.row > label { width: 144px; padding-top: 3px; color: #1a3f85; white-space: nowrap; flex: none; }
.in > label { width: 201px; }
.row > .min { display: flex; align-items: center; gap: 3px; width: 230px; margin-left: 12px; padding-top: 8px; color: #000; }
.field { display: flex; flex: 1; align-items: center; height: 24px; background: #fff; border: 1px solid #e8e8e8; border-bottom-color: #868686; min-width: 0; }
.focus { border-bottom: 2px solid #0067c0; }
.field input { flex: 1; min-width: 0; height: 20px; margin: 0; padding: 0 1px; border: 0; outline: 0; background: none; font: inherit; }
.field button { justify-content: center; width: 17px; height: 20px; background: #fdfdfd; border: 1px solid #ccc; border-radius: 4px; box-shadow: 0 0 0 1px #efefef; margin-right: 1px; }
.field button svg { width: 14px; height: 14px; }
.combo { display: flex; align-items: center; width: 207px; height: 24px; background: #fff; border: 1px solid #868686; border-radius: 2px; }
.combo select { appearance: none; flex: 1; height: 20px; border: 0; background: none; font: inherit; }
.combo svg { width: 10px; height: 6px; margin-right: 3px; }

.status { display: flex; height: 19px; font: 11px/14px "Noto Sans", "Open Sans", sans-serif; flex: none; white-space: nowrap; padding-top: 5px; }
.status span { display: flex; gap: 2px; flex: none; border-right: 1px solid #d4d4d4; padding-left: 3px; }
.status i { width: 15px; height: 14px; border-radius: 2px 2px 0 0; background: linear-gradient(#8fd08f, #0f8020 30%, #12a00c); }
.status i.blue { background: linear-gradient(#8fb0f0, #0a30a8 30%, #0a70e0); }
.status i.grey { background: linear-gradient(#fff, #b0b0b0); }
.status .s1 { width: 67px; padding-left: 0; }
.status .s2 { width: 100px; }
.status .s3 { width: 85px; }
.status .s4 { width: 90px; }
.status .msg { border: 0; padding-left: 5px; }

.popup { position: absolute; left: 1707px; top: 75px; width: 272px; padding: 2px; background: #f6f6f6; border: 1px solid #a0a0a0; box-shadow: 3px 3px 2px #777; color: #1a1a1a; }
.popup button { width: 100%; height: 40px; gap: 3px; padding-right: 7px; background: #fcfdff; }
.popup button:disabled { color: #cdcdcd; }
.pi { display: flex; align-items: center; justify-content: center; width: 43px; height: 40px; background: linear-gradient(90deg, #c9c9c9, #fafbfd); border-right: 1px solid #f0f1f3; }
.popup :disabled .pi { background: linear-gradient(90deg, #e2e3e4, #fcfdff); }
.pi svg { width: 32px; height: 32px; }
.pi .sm { width: 28px; height: 28px; }
.pi .ck { background: #cbcbcb; border: 1px solid #b4b4b4; }
.popup hr { height: 1px; margin: 0; border: 0; background: linear-gradient(90deg, #b4b4b4, #c4c4c4 50%, #fcfdff); }
.arrow { width: 4px; height: 8px; margin-left: auto; }
.mark { position: absolute; left: 1685px; top: 473px; width: 170px; height: 64px; }
```
